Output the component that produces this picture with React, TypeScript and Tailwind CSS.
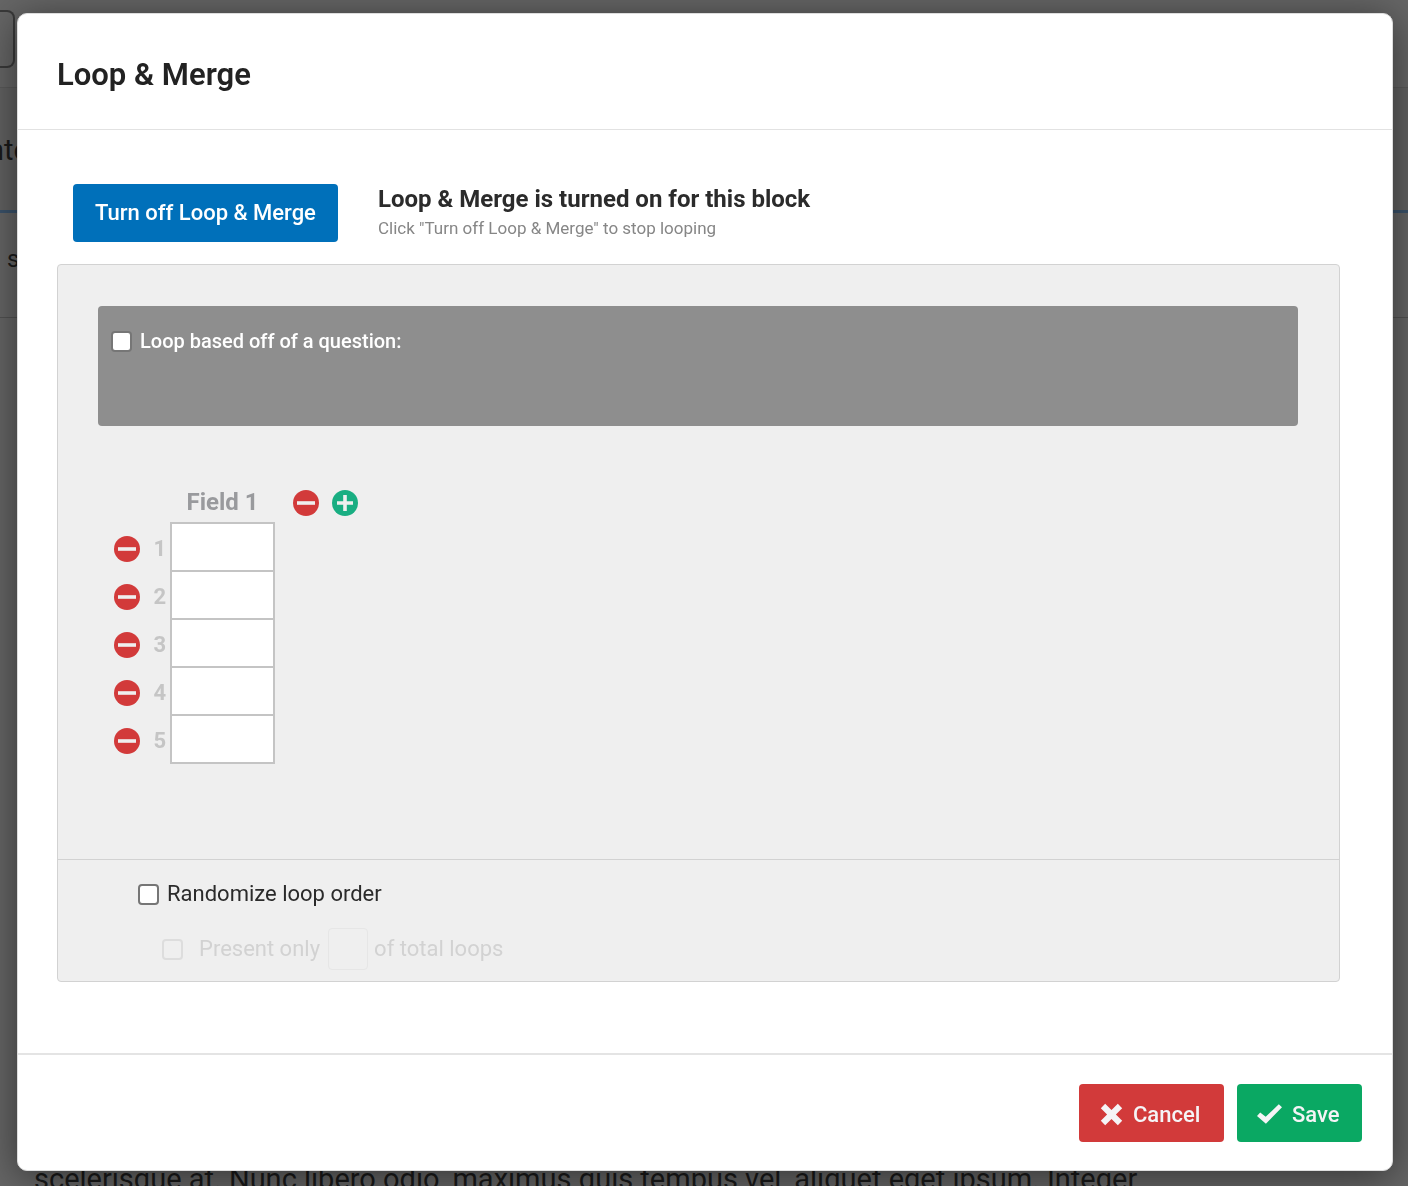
import { useState, type ReactNode } from "react";

const ROWS = [1, 2, 3, 4, 5];

function MinusIcon() {
  return (
    <svg viewBox="0 0 26 26" className="block size-[26px]" aria-hidden="true">
      <circle cx="13" cy="13" r="13" fill="#d23a3a" />
      <rect x="4" y="11.2" width="18" height="3.6" fill="#efefef" />
    </svg>
  );
}

function PlusIcon() {
  return (
    <svg viewBox="0 0 26 26" className="block size-[26px]" aria-hidden="true">
      <circle cx="13" cy="13" r="13" fill="#19ae82" />
      <path d="M5 11.2h6.2V5h3.6v6.2H21v3.6h-6.2V21h-3.6v-6.2H5z" fill="#efefef" />
    </svg>
  );
}

function IconButton({ label, children }: { label: string; children: ReactNode }) {
  return (
    <button type="button" aria-label={label} className="block shrink-0 rounded-full">
      {children}
    </button>
  );
}

function PageBehind() {
  return (
    <div aria-hidden="true" className="fixed inset-0 flex flex-col overflow-hidden bg-[#666666] text-[29px] text-[#1a1a1a]">
      <div className="h-[88px] shrink-0 border-b border-[#5a5a5a] pt-2.5">
        <div className="h-[58px] w-[15px] rounded-r-lg border-2 border-l-0 border-[#3a3a3a]" />
      </div>
      <div className="flex h-[125px] shrink-0 items-center border-b-[3px] border-[#3b536b] bg-[#626262] pt-1">
        <span className="-ml-3">nter</span>
      </div>
      <div className="flex h-[105px] shrink-0 items-center border-b border-[#525252] pb-3 pl-[7px] text-2xl">
        s
      </div>
      <div className="flex-1" />
      <p className="h-[22px] shrink-0 pl-[34px] leading-[30px] whitespace-nowrap">
        scelerisque at. Nunc libero odio, maximus quis tempus vel, aliquet eget ipsum. Integer
      </p>
    </div>
  );
}

export default function App() {
  const [byQuestion, setByQuestion] = useState(false);
  const [randomize, setRandomize] = useState(false);
  const box =
    "shrink-0 appearance-none rounded-[4px] border-2 border-[#767676] bg-white checked:bg-[#0070ba]";

  return (
    <div className="font-['Roboto','Liberation_Sans',sans-serif] text-[#2b2b2b]">
      <PageBehind />
      <div className="relative pt-[13px] pr-[15px] pb-[15px] pl-[17px]">
        <div
          role="dialog"
          aria-labelledby="title"
          className="rounded-[10px] border border-[#dddddd] bg-white shadow-[0_6px_40px_rgba(0,0,0,0.5)]"
        >
          <header className="border-b border-[#e2e2e2] px-[39px] pt-[41px] pb-[34px]">
            <h1 id="title" className="text-[31px] leading-10 font-semibold text-[#222222]">
              Loop &amp; Merge
            </h1>
          </header>

          <main className="pt-[54px] pr-[52px] pb-[71px] pl-[39px]">
            <div className="flex items-center gap-10 pl-4">
              <button
                type="button"
                className="h-[58px] w-[265px] shrink-0 rounded-[4px] bg-[#0070ba] pb-0.5 text-[22px] font-medium text-white"
              >
                Turn off Loop &amp; Merge
              </button>
              <div>
                <h2 className="text-[24px] leading-[30px] font-bold">
                  Loop &amp; Merge is turned on for this block
                </h2>
                <p className="text-[17px] leading-7 text-[#868686]">
                  Click "Turn off Loop &amp; Merge" to stop looping
                </p>
              </div>
            </div>

            <section className="mt-[22px] rounded-[4px] border border-[#d2d2d2] bg-[#efefef]">
              <div className="pt-[41px] pr-[41px] pb-[95px] pl-10">
                <div className="h-[120px] rounded-[4px] bg-[#8e8e8e] px-[13px] pt-5 text-white">
                  <label className="flex items-center gap-2 text-[20px] leading-[30px] font-medium">
                    <input
                      type="checkbox"
                      checked={byQuestion}
                      onChange={(e) => setByQuestion(e.target.checked)}
                      className={`size-[21px] ${box}`}
                    />
                    Loop based off of a question:
                  </label>
                </div>

                <table className="mt-[56px] mb-0.5 ml-4 border-separate border-spacing-0 text-[24px] leading-[30px] font-bold">
                  <thead>
                    <tr className="h-10">
                      <td className="w-[26px] p-0" />
                      <td className="w-[30px] p-0" />
                      <th scope="col" className="w-[105px] p-0 text-center text-[#999a9d]">
                        Field 1
                      </th>
                      <td className="pt-0.5 pr-0 pb-0 pl-[18px]">
                        <div className="flex gap-[13px]">
                          <IconButton label="Remove field">
                            <MinusIcon />
                          </IconButton>
                          <IconButton label="Add field">
                            <PlusIcon />
                          </IconButton>
                        </div>
                      </td>
                    </tr>
                  </thead>
                  <tbody>
                    {ROWS.map((n) => (
                      <tr key={n} className="h-12">
                        <td className="px-0 pt-1.5 pb-0">
                          <IconButton label={`Remove row ${n}`}>
                            <MinusIcon />
                          </IconButton>
                        </td>
                        <th scope="row" className="pt-1.5 pr-1 pb-0 pl-0 text-right text-[22px] text-[#c5c5c5]">
                          {n}
                        </th>
                        <td className="p-0">
                          <input
                            type="text"
                            aria-label={`Field 1, row ${n}`}
                            className="-mb-0.5 block h-[50px] w-[105px] border-2 border-[#c4c4c4] bg-white px-2 font-normal"
                          />
                        </td>
                        <td className="p-0" />
                      </tr>
                    ))}
                  </tbody>
                </table>
              </div>

              <div className="border-t border-[#d2d2d2] pt-[19px] pb-[11px] pl-20 text-[22px] leading-[30px]">
                <label className="flex w-fit items-center gap-2">
                  <input
                    type="checkbox"
                    checked={randomize}
                    onChange={(e) => setRandomize(e.target.checked)}
                    className={`size-[21px] ${box}`}
                  />
                  Randomize loop order
                </label>
                <div className="mt-[19px] flex items-center pl-6 text-[#d2d2d2]">
                  <input
                    id="present"
                    type="checkbox"
                    disabled
                    className="mr-4 size-[21px] shrink-0 appearance-none rounded-[4px] border-2 border-[#dddddd]"
                  />
                  <label htmlFor="present">Present only</label>
                  <input
                    type="text"
                    aria-label="Number of loops"
                    disabled
                    className="mr-1.5 ml-2 h-[42px] w-10 rounded-[4px] border border-[#e6e6e6] bg-transparent"
                  />
                  <span>of total loops</span>
                </div>
              </div>
            </section>
          </main>

          <footer className="flex justify-end gap-[13px] border-t-2 border-[#e4e4e4] pt-[29px] pr-[30px] pb-7 text-[22px] font-medium text-[#f5f4f6]">
            <button
              type="button"
              className="flex h-[58px] w-[145px] items-center gap-2.5 rounded-[4px] bg-[#d23a3a] pt-0.5 pl-[21px]"
            >
              <svg viewBox="0 0 23 23" className="size-[23px]" fill="currentColor" aria-hidden="true">
                <path d="M5.2.8 11.5 7.1 17.8.8l4.4 4.4-6.3 6.3 6.3 6.3-4.4 4.4-6.3-6.3-6.3 6.3L.8 17.8l6.3-6.3L.8 5.2z" />
              </svg>
              Cancel
            </button>
            <button
              type="button"
              className="flex h-[58px] w-[125px] items-center gap-2.5 rounded-[4px] bg-[#0aa863] pt-0.5 pl-5"
            >
              <svg viewBox="0 0 25 20" className="h-5 w-[25px]" fill="currentColor" aria-hidden="true">
                <path d="M21.8.2 25 3.2 8.9 19.8 0 11.9l3.2-3.4 5.5 4.3z" />
              </svg>
              Save
            </button>
          </footer>
        </div>
      </div>
    </div>
  );
}
